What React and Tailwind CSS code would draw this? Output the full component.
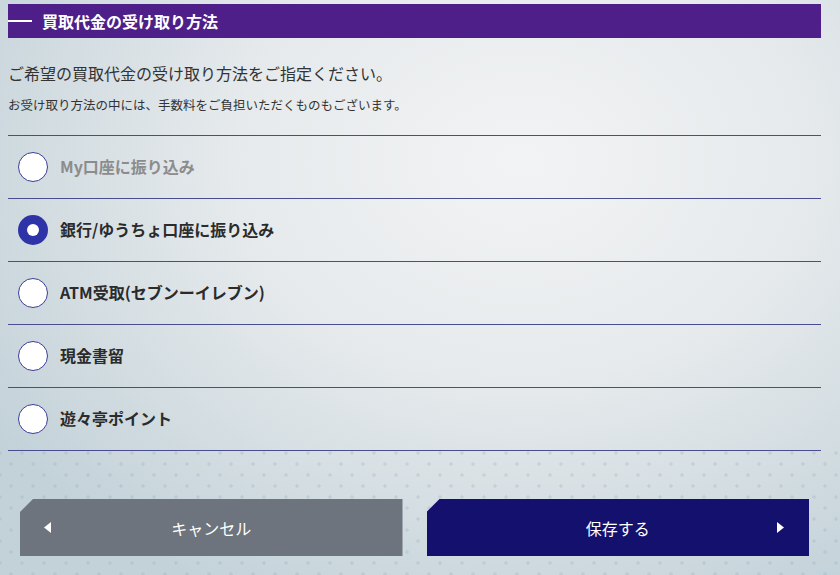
import React from 'react'

const options = [
  { label: 'My口座に振り込み', disabled: true },
  { label: '銀行/ゆうちょ口座に振り込み', checked: true },
  { label: 'ATM受取(セブンーイレブン)' },
  { label: '現金書留' },
  { label: '遊々亭ポイント' },
]

const Radio = ({ checked }) => {
  if (checked) {
    return (
      <span className="flex h-[30px] w-[30px] shrink-0 items-center justify-center rounded-full bg-[#2f33a8]">
        <span className="h-[12px] w-[12px] rounded-full bg-white" />
      </span>
    )
  }
  return <span className="h-[30px] w-[30px] shrink-0 rounded-full border border-[#3b3d96] bg-white" />
}

const App = () => {
  return (
    <div className="h-[575px] w-[840px] overflow-hidden bg-[radial-gradient(ellipse_75%_85%_at_62%_28%,#f2f3f4_0%,#e6eaec_45%,#c3d2d9_100%)] font-['Noto_Sans_CJK_JP','Noto_Sans',sans-serif] text-[#2b2b2b]">
      <div className="ml-2 w-[813px] pt-1">
        <div className="flex h-[34px] items-center gap-[10px] bg-[#4e1f88]">
          <span className="h-[2px] w-[24px] bg-white" />
          <h2 className="text-[16px] font-bold leading-none text-white">買取代金の受け取り方法</h2>
        </div>

        <p className="mt-[23px] text-[16px] leading-[24px] text-[#333]">ご希望の買取代金の受け取り方法をご指定ください。</p>
        <p className="mt-[11px] text-[12.5px] leading-[18px] text-[#333]">お受け取り方法の中には、手数料をご負担いただくものもございます。</p>

        <ul className="mt-[21px] border-t border-[#474d8f]">
          {options.map((o) => (
            <li key={o.label} className="flex h-[63px] items-center gap-[12px] border-b border-[#474d8f] pl-[10px]">
              <Radio checked={o.checked} />
              <span className={`-mt-[2px] text-[16px] font-bold ${o.disabled ? 'text-[#8c8c8c]' : 'text-[#2b2b2b]'}`}>{o.label}</span>
            </li>
          ))}
        </ul>
      </div>

      <div className="h-[124px] bg-[radial-gradient(circle,rgba(140,165,178,0.25)_1.4px,transparent_2px),radial-gradient(circle,rgba(140,165,178,0.25)_1.4px,transparent_2px)] bg-[length:22px_22px,22px_22px] bg-[position:0_2px,11px_13px] pt-[48px]">
        <div className="ml-2 grid w-[813px] grid-cols-2 gap-6 px-3">
          <button className="relative flex h-[57px] items-center justify-center bg-[#6d747d] text-[16px] text-white [clip-path:polygon(13px_0,100%_0,100%_100%,0_100%,0_13px)]">
            <svg className="absolute left-[24px] top-[23px]" width="7" height="11" viewBox="0 0 7 11">
              <polygon points="7,0 7,11 0,5.5" fill="#fff" />
            </svg>
            キャンセル
          </button>
          <button className="relative flex h-[57px] items-center justify-center bg-[#13106e] text-[16px] text-white [clip-path:polygon(13px_0,100%_0,100%_100%,0_100%,0_13px)]">
            保存する
            <svg className="absolute right-[25px] top-[23px]" width="7" height="11" viewBox="0 0 7 11">
              <polygon points="0,0 7,5.5 0,11" fill="#fff" />
            </svg>
          </button>
        </div>
      </div>
    </div>
  )
}

export default App
